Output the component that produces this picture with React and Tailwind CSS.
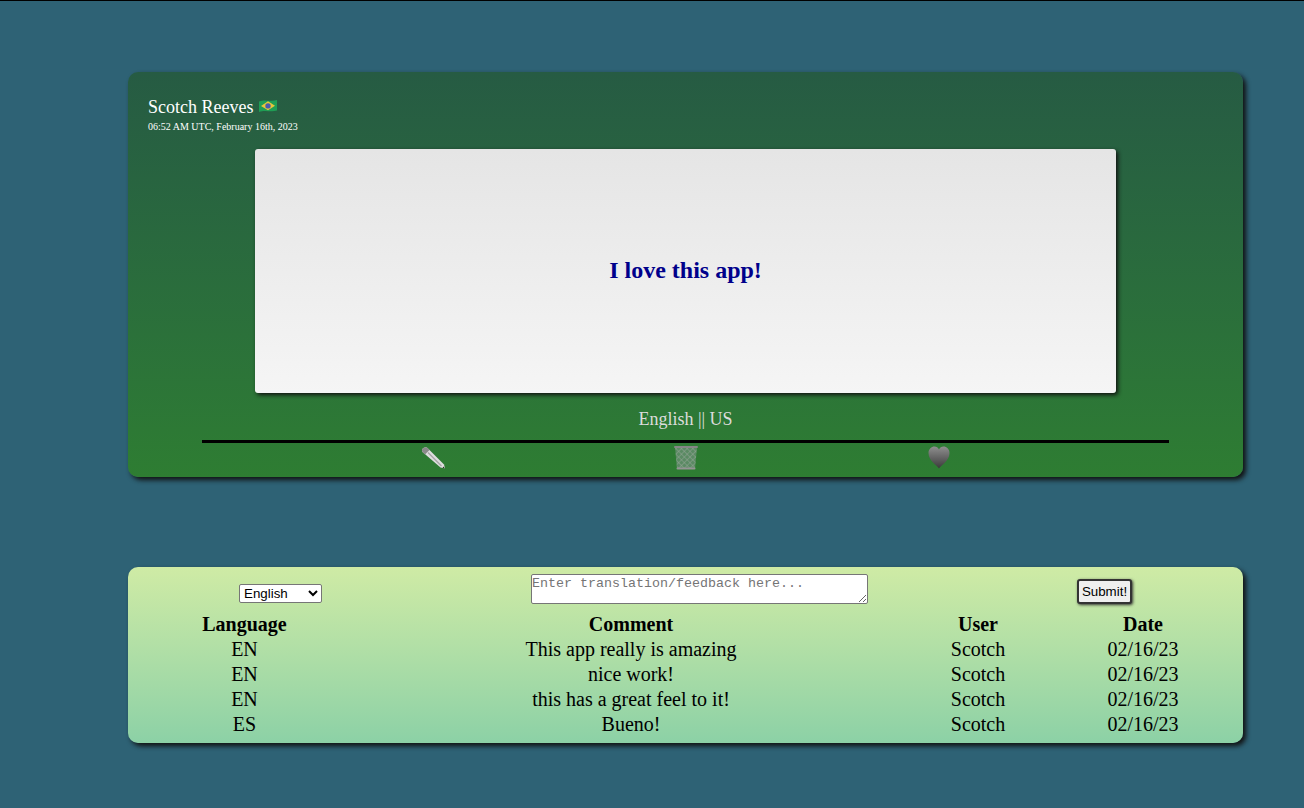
export default function App() {
  const rows = [
    ["EN", "This app really is amazing"],
    ["EN", "nice work!"],
    ["EN", "this has a great feel to it!"],
    ["ES", "Bueno!"],
  ];
  const serif = "font-['Liberation_Serif',serif]";
  return (
    <div className={`min-h-[808px] bg-[#2e6275] border-t border-black pt-[71px] pl-[128px] ${serif}`}>
      <div className="w-[1115px] h-[405px] rounded-[10px] bg-gradient-to-b from-[#265b43] to-[#2e7d32] shadow-[3px_3px_5px_#111] pt-[26px] flex flex-col">
        <div className="pl-[20px] text-white">
          <div className="flex items-center h-[19px] text-[18px] leading-[19px]">
            Scotch Reeves
            <svg className="ml-[6px] mt-[-3px]" width="18" height="14" viewBox="0 0 18 14">
              <path d="M0 2.5 C6 0 12 3 18 1 V11.5 C12 13.5 6 10.5 0 13 Z" fill="#1f9d55" />
              <path d="M9 2.2 L16 6.7 L9 11.2 L2 7 Z" fill="#e9c53a" />
              <circle cx="9" cy="6.9" r="2.7" fill="#4a5bab" />
            </svg>
          </div>
          <div className="text-[10px] leading-[12px] mt-[4px]">06:52 AM UTC, February 16th, 2023</div>
        </div>
        <div className="ml-[127px] mt-[16px] w-[861px] h-[244px] shrink-0 rounded-[3px] bg-gradient-to-b from-[#e5e5e5] to-[#f5f5f5] shadow-[2px_2px_4px_#111] flex items-center justify-center">
          <span className="text-[24px] font-bold text-[#00008b] leading-[28px] mb-[2px]">I love this app!</span>
        </div>
        <div className="h-[50px] shrink-0 ml-[74px] w-[967px] border-b-[3px] border-black flex justify-center text-[18px] leading-[20px] text-[#dcdcdc] pt-[16px]">
          English || US
        </div>
        <div className="ml-[292px] w-[532px] flex justify-between items-center h-[29px] shrink-0">
          <svg width="26" height="24" viewBox="0 0 26 24">
            <path d="M2.5 6 C1.5 4.5 2 3 3.5 2 C5 1 6.5 1 7.5 2 L24 18.5 L25 22.5 L20.5 21.5 Z" fill="#dedede" />
            <path d="M2.5 6 C1.5 4.5 2 3 3.5 2 C5 1 6.5 1 7.5 2 L9.5 4 L5 8.5 Z" fill="#8a8a8a" />
            <path d="M8 6.5 L21.5 20" stroke="#a9a9a9" strokeWidth="1.5" />
            <path d="M23.2 20.5 L25 22.5 L22.7 22 Z" fill="#222" />
          </svg>
          <svg width="26" height="25" viewBox="0 0 26 25">
            <defs>
              <pattern id="mesh" width="4" height="4" patternUnits="userSpaceOnUse" patternTransform="rotate(45)">
                <rect width="4" height="4" fill="#5a8a63" />
                <path d="M0 0H4M0 0V4" stroke="#94a596" strokeWidth="1" />
              </pattern>
            </defs>
            <path d="M2 2 H24 L22 24 H4 Z" fill="url(#mesh)" />
            <rect x="1" y="1" width="24" height="2" rx="1" fill="#868686" />
            <rect x="3.5" y="22.5" width="19" height="2" rx="1" fill="#949494" />
          </svg>
          <svg width="26" height="23" viewBox="0 0 26 23">
            <defs>
              <linearGradient id="hg" x1="0" y1="0" x2="0" y2="1">
                <stop offset="0" stopColor="#8f8f8f" />
                <stop offset="1" stopColor="#3a3a3a" />
              </linearGradient>
            </defs>
            <path d="M13 22.5 C11 19.5 2.5 14.5 2.5 7 C2.5 3 5.5 0.5 8.5 0.5 C10.5 0.5 12.2 1.6 13 3.5 C13.8 1.6 15.5 0.5 17.5 0.5 C20.5 0.5 23.5 3 23.5 7 C23.5 14.5 15 19.5 13 22.5 Z" fill="url(#hg)" />
          </svg>
        </div>
      </div>

      <div className="mt-[90px] w-[1115px] h-[176px] rounded-[10px] bg-gradient-to-b from-[#cfeba5] to-[#8cd1a6] shadow-[3px_3px_5px_#111] text-black">
        <div className="flex h-[45px] pt-[7px]">
          <select className="ml-[111px] mt-[10px] w-[83px] h-[19px] text-[13.33px] leading-[15px] font-['Liberation_Sans',sans-serif] bg-white border border-[#767676] rounded-[2px]" defaultValue="English">
            <option>English</option>
          </select>
          <textarea
            className="ml-[209px] w-[337px] h-[30px] text-[13.33px] leading-[15px] font-['Liberation_Mono',monospace] bg-white border border-[#767676] rounded-[2px] pt-[1px] placeholder:text-[#757575] block"
            placeholder="Enter translation/feedback here..."
          />
          <button className="ml-[209px] mt-[5px] w-[55px] h-[25px] text-[13.33px] font-['Liberation_Sans',sans-serif] bg-[#efefef] border-2 border-[#333] rounded-[3px] shadow-[1px_1px_3px_#333] leading-none">
            Submit!
          </button>
        </div>
        <div className="grid grid-cols-[233px_540px_154px_176px] text-center text-[20px] leading-[25px]">
          <div className="font-bold">Language</div>
          <div className="font-bold">Comment</div>
          <div className="font-bold">User</div>
          <div className="font-bold">Date</div>
          {rows.map((r, i) => [
            <div key={`${i}a`}>{r[0]}</div>,
            <div key={`${i}b`}>{r[1]}</div>,
            <div key={`${i}c`}>Scotch</div>,
            <div key={`${i}d`}>02/16/23</div>,
          ])}
        </div>
      </div>
    </div>
  );
}
